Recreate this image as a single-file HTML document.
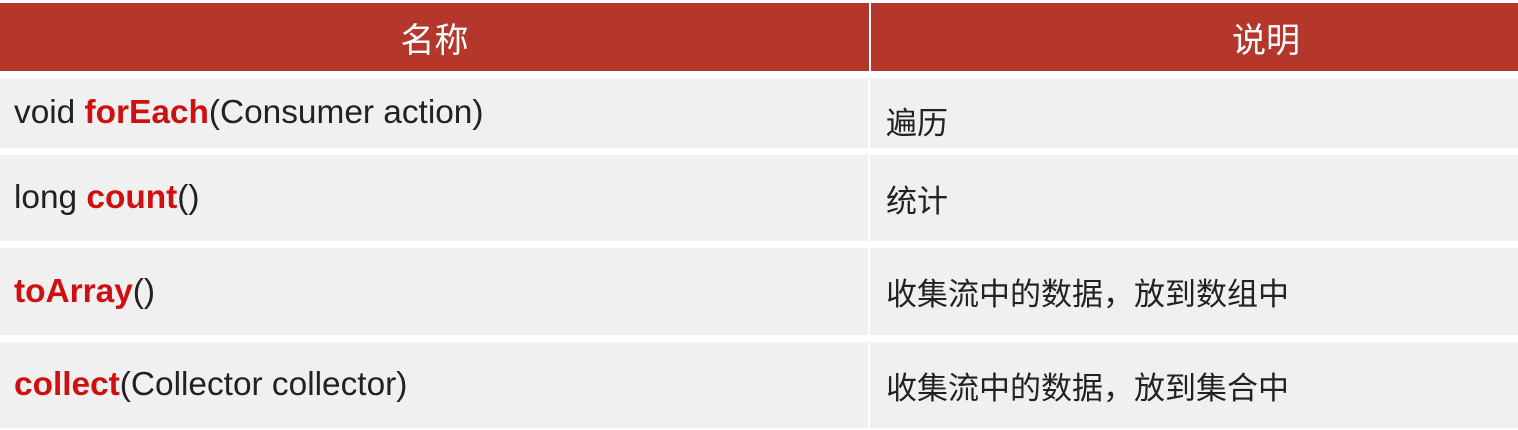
<!DOCTYPE html>
<html><head><meta charset="utf-8"><style>
*{margin:0;padding:0;box-sizing:border-box}
body{width:1518px;height:430px;background:#fff;position:relative;overflow:hidden;font-family:"Liberation Sans","Noto Sans CJK SC",sans-serif}
.h{position:absolute;top:3px;height:68px;background:#b5372b;color:#fff;font-size:34px;display:flex;align-items:center;justify-content:center}
.c{position:absolute;background:#f0f0f0;color:#222;font-size:33.4px;display:flex;align-items:center}
.l{left:0;width:868px;padding-left:14px}
.r{left:870px;width:648px;padding-left:16px;font-size:31px}
b{color:#d01010}
</style></head><body>
<div class="h" style="left:0;width:869px">名称</div>
<div class="h" style="left:871px;width:647px;justify-content:flex-start;padding-left:361px">说明</div>

<div class="c l" style="top:78px;height:70px">void&nbsp;<b>forEach</b>(Consumer action)</div>
<div class="c r" style="top:78px;height:70px;padding-top:14px">遍历</div>

<div class="c l" style="top:155px;height:86px">long&nbsp;<b>count</b>()</div>
<div class="c r" style="top:155px;height:86px">统计</div>

<div class="c l" style="top:248px;height:87px"><b>toArray</b>()</div>
<div class="c r" style="top:248px;height:87px">收集流中的数据，放到数组中</div>

<div class="c l" style="top:342px;height:86px"><b>collect</b>(Collector collector)</div>
<div class="c r" style="top:342px;height:86px">收集流中的数据，放到集合中</div>
</body></html>
